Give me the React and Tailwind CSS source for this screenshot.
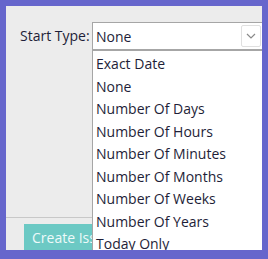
import React from 'react';

const options = [
  'Exact Date',
  'None',
  'Number Of Days',
  'Number Of Hours',
  'Number Of Minutes',
  'Number Of Months',
  'Number Of Weeks',
  'Number Of Years',
  'Today Only',
];

const Chevron = () => (
  <svg width="10" height="6" viewBox="0 0 10 6" fill="none">
    <path d="M1 1l4 4 4-4" stroke="#8a8a8a" strokeWidth="1.2" />
  </svg>
);

const App = () => {
  return (
    <div
      className="w-[268px] h-[259px] bg-[#6666cc] pt-[6px] pl-[6px] pr-[6px] pb-[9px]"
      style={{ fontFamily: '"Open Sans", "Noto Sans", sans-serif' }}
    >
      <div className="relative w-full h-full bg-[#ececec] overflow-hidden flex flex-col text-[14px] text-[#1e1e38]">
        <div className="flex items-center pt-[16px] pl-[14px]">
          <span className="w-[72px] leading-none">Start Type:</span>
          <div className="flex-1 h-[28px] bg-white border border-[#a6a6a6] border-r-0 flex items-center justify-between pl-[3px] pr-[1px]">
            <span>None</span>
            <div className="w-[20px] h-[22px] border border-[#e0e0e0] rounded-[2px] flex items-center justify-center">
              <Chevron />
            </div>
          </div>
        </div>

        <div className="flex-1" />
        <div className="h-px bg-[#c8c8c8] w-[86px]" />
        <div className="pl-[18px] pt-[6px]">
          <div className="w-[68px] h-[26px] overflow-hidden bg-[#6cc9c4] text-[#eefafa] flex items-center pl-[8px] whitespace-nowrap">
            Create Iss
          </div>
        </div>

        <div className="absolute left-[86px] top-[44px] right-0 bottom-0 bg-white border-l border-t border-[#a6a6a6] pt-[2px] pl-[3px]">
          {options.map((o) => (
            <div key={o} className="leading-[22.5px] h-[22.5px] whitespace-nowrap">
              {o}
            </div>
          ))}
        </div>
      </div>
    </div>
  );
};

export default App;
